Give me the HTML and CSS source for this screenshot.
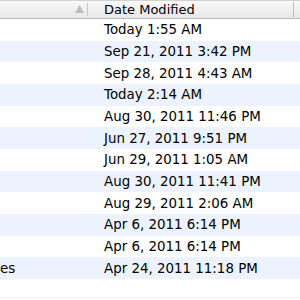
FILE: index.html
```html
<!DOCTYPE html>
<html>
<head>
<meta charset="utf-8">
<link rel="stylesheet" href="styles.css">
</head>
<body>
<div class="list">
  <div class="header">
    <div class="hcell name-h">
      <svg class="sort" width="9" height="8" viewBox="0 0 9 8"><polygon points="4.5,0 9,8 0,8" fill="#bdbdbd"/></svg>
    </div>
    <div class="hcell date-h">Date Modified</div>
    <div class="hcell rest-h"></div>
  </div>
  <div class="rows">
    <div class="row"><div class="name"></div><div class="date">Today 1:55 AM</div></div>
    <div class="row"><div class="name"></div><div class="date">Sep 21, 2011 3:42 PM</div></div>
    <div class="row"><div class="name"></div><div class="date">Sep 28, 2011 4:43 AM</div></div>
    <div class="row"><div class="name"></div><div class="date">Today 2:14 AM</div></div>
    <div class="row"><div class="name"></div><div class="date">Aug 30, 2011 11:46 PM</div></div>
    <div class="row"><div class="name"></div><div class="date">Jun 27, 2011 9:51 PM</div></div>
    <div class="row"><div class="name"></div><div class="date">Jun 29, 2011 1:05 AM</div></div>
    <div class="row"><div class="name"></div><div class="date">Aug 30, 2011 11:41 PM</div></div>
    <div class="row"><div class="name"></div><div class="date">Aug 29, 2011 2:06 AM</div></div>
    <div class="row"><div class="name"></div><div class="date">Apr 6, 2011 6:14 PM</div></div>
    <div class="row"><div class="name"></div><div class="date">Apr 6, 2011 6:14 PM</div></div>
    <div class="row"><div class="name">es</div><div class="date">Apr 24, 2011 11:18 PM</div></div>
    <div class="row last"><div class="name"></div><div class="date"></div></div>
  </div>
</div>
</body>
</html>
```

FILE: styles.css
```css
html, body {
  margin: 0;
  padding: 0;
  background: #ffffff;
}
body {
  width: 300px;
  height: 300px;
  overflow: hidden;
  font-family: "DejaVu Sans", sans-serif;
  font-size: 13.4px;
  color: #000;
}
.list {
  width: 300px;
  height: 300px;
  overflow: hidden;
}
.header {
  display: flex;
  height: 17px;
  border-top: 1px solid #d2d2d2;
  border-bottom: 1px solid #bcbcbc;
  background: linear-gradient(#f9f9f9, #e7e7e7);
}
.hcell {
  height: 17px;
  display: flex;
  align-items: center;
  box-sizing: border-box;
}
.name-h {
  width: 88px;
  justify-content: flex-end;
  padding-right: 4px;
  position: relative;
}
.name-h::after {
  content: "";
  position: absolute;
  right: 0;
  top: 2px;
  width: 1px;
  height: 13px;
  background: #c9c9c9;
}
.sort {
  display: block;
  margin-top: -2px;
}
.date-h {
  width: 206px;
  padding-left: 16px;
  font-size: 13px;
  position: relative;
}
.date-h::after {
  content: "";
  position: absolute;
  right: 0;
  top: 1px;
  width: 1px;
  height: 15px;
  background: #bdbdbd;
}
.rest-h {
  flex: 1;
}
.rows {
  display: flex;
  flex-direction: column;
}
.row {
  display: flex;
  align-items: center;
  height: calc(65px / 3);
  flex-shrink: 0;
}
.row.last {
  height: 18px;
  border-bottom: 1px solid #f0f0f2;
}
.row:nth-child(even) {
  background: #edf3fe;
}
.name {
  width: 88px;
  white-space: nowrap;
  overflow: hidden;
}
.date {
  padding-left: 16px;
  white-space: nowrap;
}
```
